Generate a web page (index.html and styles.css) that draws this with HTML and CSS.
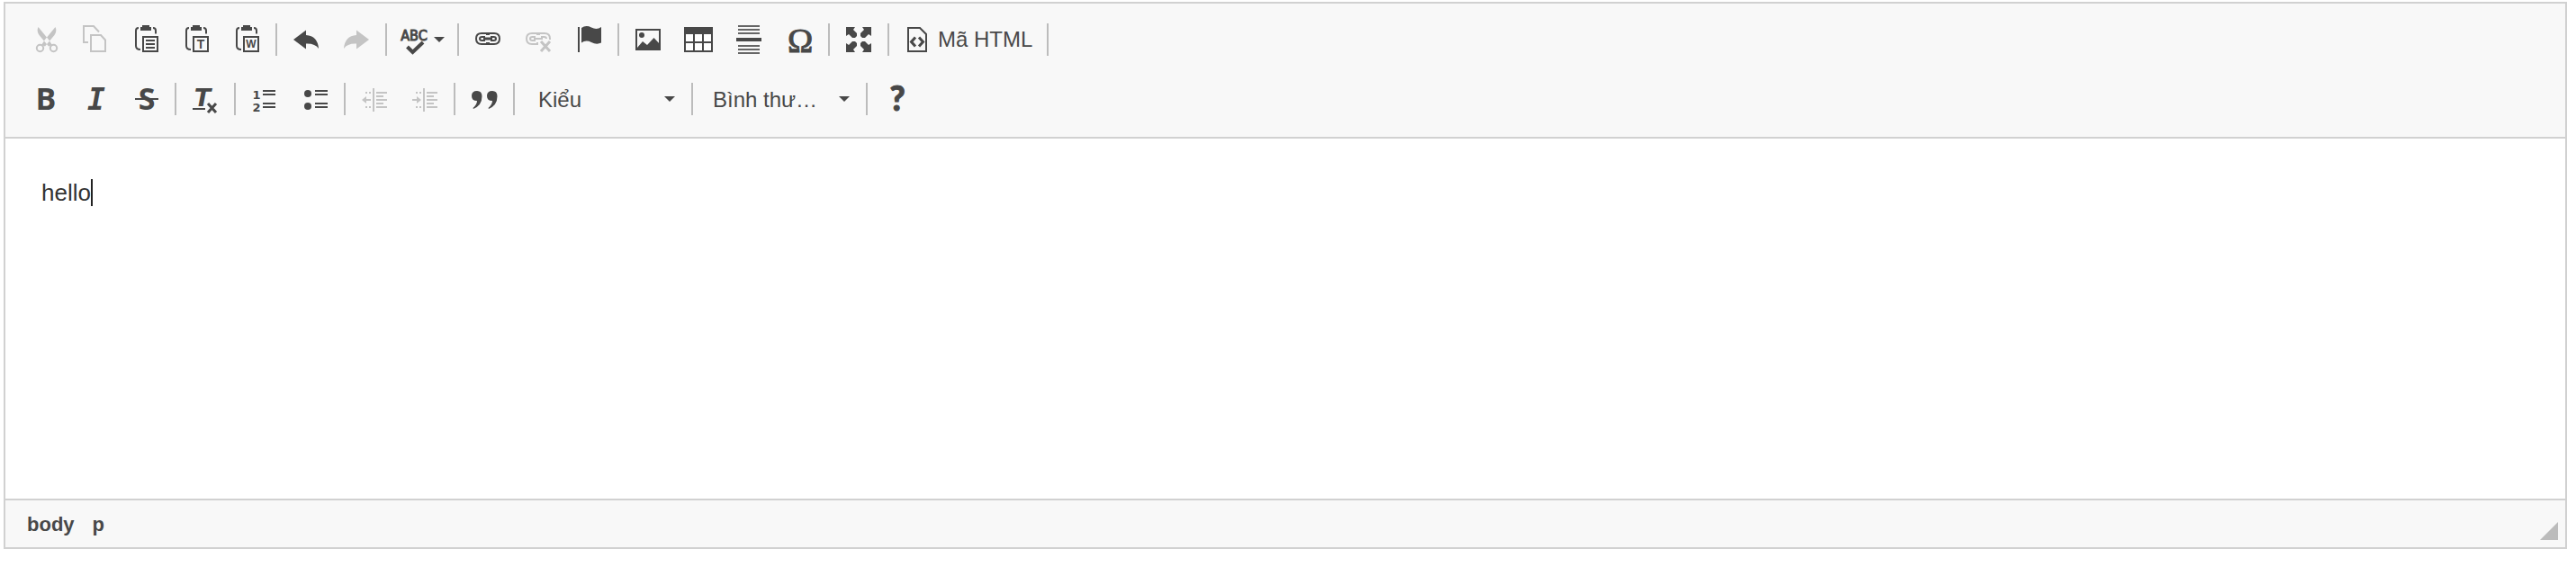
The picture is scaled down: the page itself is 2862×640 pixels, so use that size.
FILE: index.html
```
<!DOCTYPE html>
<html lang="vi">
<head>
<meta charset="utf-8">
<meta name="viewport" content="width=device-width, initial-scale=1">
<title>Editor</title>
<link rel="stylesheet" href="styles.css">
</head>
<body>
<main class="editor">
  <header class="toolbar">
    <div class="toolbar-row">
      <div class="group">
        <button class="tool" type="button" aria-label="Cắt" disabled><svg class="icon" viewBox="0 0 32 32"><circle cx="10.500" cy="25.500" r="3.700" class="line"/><circle cx="25.500" cy="25.500" r="3.700" class="line"/><path d="M8.500 2C7 5 7.500 8 9.500 11L20 23.500l4-1.500L20 16ZM27.500 2c1.500 3 1 6-1 9L16 23.500l-4-1.500L16 16Z"/></svg></button>
        <button class="tool" type="button" aria-label="Sao chép" disabled><svg class="icon" viewBox="0 0 32 32"><path class="line" d="M8 19H3V1h11l6 6.500M11 11h11l5 5.500V29H11Z"/></svg></button>
        <button class="tool" type="button" aria-label="Dán"><svg class="icon" viewBox="0 0 32 32"><path class="line" d="M8 3Q5 3 5 6v17q0 4 5 4M24 3q3 0 3 3v3.500M13 13h16v16H13ZM16 17h10M16 21h10M16 25h10"/><path d="M10 6V2h2V0h8v2h2v4Z"/></svg></button>
        <button class="tool" type="button" aria-label="Dán theo định dạng văn bản thuần"><svg class="icon" viewBox="0 0 32 32"><path class="line" d="M8 3Q5 3 5 6v17q0 4 5 4M24 3q3 0 3 3v3.500M13 13h16v16H13Z"/><path d="M10 6V2h2V0h8v2h2v4Z"/><text x="21" y="26" class="glyph sheet">T</text></svg></button>
        <button class="tool" type="button" aria-label="Dán với định dạng Word"><svg class="icon" viewBox="0 0 32 32"><path class="line" d="M8 3Q5 3 5 6v17q0 4 5 4M24 3q3 0 3 3v3.500M13 13h16v16H13Z"/><path d="M10 6V2h2V0h8v2h2v4Z"/><text x="21" y="25" class="glyph sheet-word">W</text></svg></button>
      </div>
      <div class="group">
        <button class="tool" type="button" aria-label="Khôi phục thao tác"><svg class="icon" viewBox="0 0 32 32"><path d="M2 16 16 5.500V11Q29 12 30 26q-4-6-14-5.500v6Z"/></svg></button>
        <button class="tool" type="button" aria-label="Làm lại thao tác" disabled><svg class="icon" viewBox="0 0 32 32"><path d="M30 16 16 5.500V11Q3 12 2 26q4-6 14-5.500v6Z"/></svg></button>
      </div>
      <div class="group">
        <button class="tool tool-menu" type="button" aria-label="Kiểm tra chính tả"><svg class="icon" viewBox="0 0 32 32"><text x="14" y="17" class="glyph abc">ABC</text><path class="halo" d="M7 24l6 5.500L23 19"/><path class="check" d="M6.500 24l6 6L24 19"/></svg><svg class="arrow" viewBox="0 0 12 6"><path d="M0 0h12L6 6Z"/></svg></button>
      </div>
      <div class="group">
        <button class="tool" type="button" aria-label="Chèn/Sửa liên kết"><svg class="icon" viewBox="0 0 32 32"><path class="line" d="M15 11V9H9Q3 9 3 15t6 6h6v-2M17 11V9h6q6 0 6 6t-6 6h-6v-2M13 13H9.500Q7 13 7 15t2.500 2H13M19 13h3.500Q25 13 25 15t-2.500 2H19"/><path class="heavy" d="M11 15h10"/></svg></button>
        <button class="tool" type="button" aria-label="Xoá liên kết" disabled><svg class="icon" viewBox="0 0 32 32"><path class="line" d="M15 11V9H9Q3 9 3 15t6 6h6v-2M17 11V9h6q6 0 6 6v1M13 13H9.500Q7 13 7 15t2.500 2H13M19 13h3.500Q25 13 25 15M11 15h10"/><path class="heavy" d="m19 18 10 11M29 18 19 29"/></svg></button>
        <button class="tool" type="button" aria-label="Chèn/Sửa điểm neo"><svg class="icon" viewBox="0 0 32 32"><path d="M4 2h2v28H4ZM8 3Q13-.5 19 2.500T30 2v17.500Q25 22 19 19T8 19.500Z"/></svg></button>
      </div>
      <div class="group">
        <button class="tool" type="button" aria-label="Hình ảnh"><svg class="icon" viewBox="0 0 32 32"><path class="line" d="M3 5h26v22H3Z"/><circle cx="9" cy="11" r="3"/><path d="M4 27v-2l6-7 5 4 7.500-8L29 21v6Z"/></svg></button>
        <button class="tool" type="button" aria-label="Bảng"><svg class="icon" viewBox="0 0 32 32"><path d="M0 2h32v28H0Z"/><path class="cell" d="M2 10h8v8H2ZM12 10h8v8h-8ZM22 10h8v8h-8ZM2 20h8v8H2ZM12 20h8v8h-8ZM22 20h8v8h-8Z"/></svg></button>
        <button class="tool" type="button" aria-label="Chèn đường phân cách ngang"><svg class="icon" viewBox="0 0 32 32"><path class="rules" d="M4 0h24v2H4ZM4 4h24v2H4ZM4 8h24v2H4ZM4 22h24v2H4ZM4 26h24v2H4ZM4 30h24v2H4Z"/><path d="M2 14h28v4H2Z"/></svg></button>
        <button class="tool" type="button" aria-label="Chèn ký tự đặc biệt"><svg class="icon" viewBox="0 0 32 32"><text x="17" y="30" class="glyph omega">Ω</text></svg></button>
      </div>
      <div class="group">
        <button class="tool" type="button" aria-label="Phóng to tối đa"><svg class="icon" viewBox="0 0 32 32"><path d="M2 2h10l-2 3 4 4v3l-2 2H9L5 10l-3 2ZM30 2H20l2 3-4 4v3l2 2h3l4-4 3 2ZM2 30h10l-2-3 4-4v-3l-2-2H9l-4 4-3-2ZM30 30H20l2-3-4-4v-3l2-2h3l4 4 3-2Z"/></svg></button>
      </div>
      <div class="group">
        <button class="tool tool-source" type="button"><svg class="icon" viewBox="0 0 32 32"><path class="line" d="M5 3h13l7 7v19H5Z"/><path class="heavy" d="M13 13.500 8.500 18.500l4.500 5M17 13.500l4.500 5-4.500 5"/></svg><span>Mã HTML</span></button>
      </div>
    </div>
    <div class="toolbar-row">
      <div class="group">
        <button class="tool" type="button" aria-label="Đậm"><svg class="icon" viewBox="0 0 32 32"><text x="17" y="28" class="glyph letter">B</text></svg></button>
        <button class="tool" type="button" aria-label="Nghiêng"><svg class="icon" viewBox="0 0 32 32"><text x="17" y="28" class="glyph slab">I</text></svg></button>
        <button class="tool" type="button" aria-label="Gạch xuyên ngang"><svg class="icon" viewBox="0 0 32 32"><text x="17" y="28" class="glyph letter">S</text><path d="M4 15h26v2H4Z"/></svg></button>
      </div>
      <div class="group">
        <button class="tool" type="button" aria-label="Xoá định dạng"><svg class="icon" viewBox="0 0 32 32"><text x="13" y="24" class="glyph letter-small">T</text><path d="M2 26h14v2H2Z"/><path class="heavy" d="m19 21 9 10M28 21l-9 10"/></svg></button>
      </div>
      <div class="group">
        <button class="tool" type="button" aria-label="Chèn/Xoá Danh sách có thứ tự"><svg class="icon" viewBox="0 0 32 32"><text x="7" y="16" class="glyph number">1</text><text x="7" y="30" class="glyph number">2</text><path d="M14 6h14v2H14ZM14 10h14v2H14ZM14 20h14v2H14ZM14 24h14v2H14Z"/></svg></button>
        <button class="tool" type="button" aria-label="Chèn/Xoá Danh sách không thứ tự"><svg class="icon" viewBox="0 0 32 32"><circle cx="8" cy="10" r="4"/><circle cx="8" cy="24" r="4"/><path d="M16 6h14v2H16ZM16 10h14v2H16ZM16 20h14v2H16ZM16 24h14v2H16Z"/></svg></button>
      </div>
      <div class="group">
        <button class="tool" type="button" aria-label="Dịch ra ngoài" disabled><svg class="icon" viewBox="0 0 32 32"><path d="M14 4h2v26h-2ZM18 8h12v2H18ZM18 12h8v2h-8ZM18 16h12v2H18ZM18 20h8v2h-8ZM18 24h12v2H18ZM6 8h2v2H6ZM10 8h2v2h-2ZM6 24h2v2H6ZM10 24h2v2h-2ZM2 17l5-4v3h5v2H7v3Z"/></svg></button>
        <button class="tool" type="button" aria-label="Dịch vào trong" disabled><svg class="icon" viewBox="0 0 32 32"><path d="M14 4h2v26h-2ZM18 8h12v2H18ZM18 12h8v2h-8ZM18 16h12v2H18ZM18 20h8v2h-8ZM18 24h12v2H18ZM6 8h2v2H6ZM10 8h2v2h-2ZM6 24h2v2H6ZM10 24h2v2h-2ZM12 17l-5-4v3H2v2h5v3Z"/></svg></button>
      </div>
      <div class="group">
        <button class="tool" type="button" aria-label="Khối trích dẫn"><svg class="icon" viewBox="0 0 32 32"><path d="M8 7q5.500 0 5.500 6 0 10-9.500 14l-.5-1Q8 22 8 18q-6 0-6-5.500T8 7ZM25 7q5.500 0 5.500 6 0 10-9.500 14l-.5-1Q25 22 25 18q-6 0-6-5.500T25 7Z"/></svg></button>
      </div>
      <div class="group group-styles">
        <label class="combo"><select aria-label="Phong cách"><option>Kiểu</option></select><svg class="arrow" viewBox="0 0 12 6"><path d="M0 0h12L6 6Z"/></svg></label>
      </div>
      <div class="group">
        <label class="combo"><select aria-label="Định dạng"><option>Bình thư…</option></select><svg class="arrow" viewBox="0 0 12 6"><path d="M0 0h12L6 6Z"/></svg></label>
      </div>
      <div class="group group-last">
        <button class="tool" type="button" aria-label="Trợ giúp"><svg class="icon" viewBox="0 0 32 32"><text x="17" y="29" class="glyph help">?</text></svg></button>
      </div>
    </div>
  </header>
  <div class="content" contenteditable="true" role="textbox" aria-multiline="true" aria-label="Nội dung"><p>hello<span class="caret"></span></p></div>
  <footer class="status">
    <nav class="path" aria-label="Nhãn thành phần"><a href="#body">body</a><a href="#p">p</a></nav>
    <svg class="resizer" viewBox="0 0 20 20"><path d="M20 0v20H0Z"/></svg>
  </footer>
</main>
</body>
</html>
```
FILE: styles.css
```
* {
  box-sizing: border-box;
}

body {
  margin: 2px 10px 30px 4px;
  background: #fff;
  color: #484848;
  font-family: "Liberation Sans", Arial, Helvetica, sans-serif;
  font-size: 24px;
}

.editor {
  border: 2px solid #d1d1d1;
}

.toolbar {
  display: flex;
  flex-direction: column;
  gap: 16px;
  padding: 15px 16px 17px;
  background: #f8f8f8;
  border-bottom: 2px solid #d1d1d1;
}

.toolbar-row,
.group {
  display: flex;
  align-items: center;
}

.toolbar-row {
  flex-wrap: wrap;
}

.group::after {
  content: "";
  width: 2px;
  height: 36px;
  margin: 0 4px;
  background: #bcbcbc;
}

.group-last::after {
  display: none;
}

.group-styles {
  padding-left: 4px;
}

.tool {
  display: flex;
  align-items: center;
  height: 50px;
  padding: 0 12px;
  border: 0;
  background: none;
  color: #484848;
  font: inherit;
}

.tool:disabled {
  color: #c4c4c4;
}

.tool-menu {
  gap: 4px;
  padding-right: 10px;
}

.tool-source {
  gap: 6px;
}

.icon {
  display: block;
  width: 32px;
  height: 32px;
  overflow: visible;
  fill: currentColor;
}

.arrow {
  display: block;
  width: 12px;
  height: 6px;
  fill: #484848;
}

.line,
.heavy,
.check,
.halo {
  fill: none;
  stroke: currentColor;
  stroke-width: 2;
}

.heavy {
  stroke-width: 3;
}

.check {
  stroke-width: 4;
}

.halo {
  stroke: #f8f8f8;
  stroke-width: 8;
}

.cell {
  fill: #fff;
}

.rules {
  fill: #666;
}

.glyph {
  text-anchor: middle;
  font-family: "Open Sans", sans-serif;
  font-weight: 700;
}

.letter {
  font-size: 34px;
}

.letter-small {
  font-family: "DejaVu Sans", sans-serif;
  font-size: 27px;
  font-style: italic;
}

.slab {
  font-family: "DejaVu Sans Mono", monospace;
  font-size: 33px;
  font-style: italic;
}

.help {
  font-family: Lato, sans-serif;
  font-weight: 900;
  font-size: 37px;
  stroke: currentColor;
  stroke-width: 1;
}

.omega {
  font-family: "Liberation Serif", serif;
  font-weight: 400;
  font-size: 38px;
  stroke: currentColor;
  stroke-width: 1;
}

.abc {
  font-family: "DejaVu Sans Condensed", "DejaVu Sans", sans-serif;
  font-weight: 400;
  font-size: 16px;
  stroke: currentColor;
  stroke-width: 1;
}

.sheet {
  font-family: "Liberation Sans", sans-serif;
  font-size: 14px;
}

.sheet-word {
  font-family: "Liberation Sans", sans-serif;
  font-size: 12px;
}

.number {
  font-family: "DejaVu Sans", sans-serif;
  font-size: 13px;
}

.combo {
  display: flex;
  align-items: center;
  width: 184px;
  height: 50px;
  padding: 0 14px 0 18px;
}

.combo select {
  flex: 1;
  min-width: 0;
  padding: 0;
  border: 0;
  appearance: none;
  background: none;
  color: inherit;
  font: inherit;
}

.content {
  height: 400px;
  padding: 40px;
  color: #333;
  font-size: 26px;
  line-height: 40px;
  outline: 0;
}

.content p {
  display: flex;
  align-items: center;
  margin: 0;
}

.caret {
  width: 2px;
  height: 30px;
  background: #222;
}

.status {
  display: flex;
  align-items: center;
  justify-content: space-between;
  height: 54px;
  padding: 2px 8px 0 24px;
  border-top: 2px solid #d1d1d1;
  background: #f8f8f8;
}

.path {
  display: flex;
  gap: 20px;
  font-size: 22px;
  font-weight: 700;
}

.path a {
  color: #484848;
  text-decoration: none;
}

.resizer {
  width: 20px;
  height: 20px;
  margin-top: 14px;
  fill: #bcbcbc;
}
```
